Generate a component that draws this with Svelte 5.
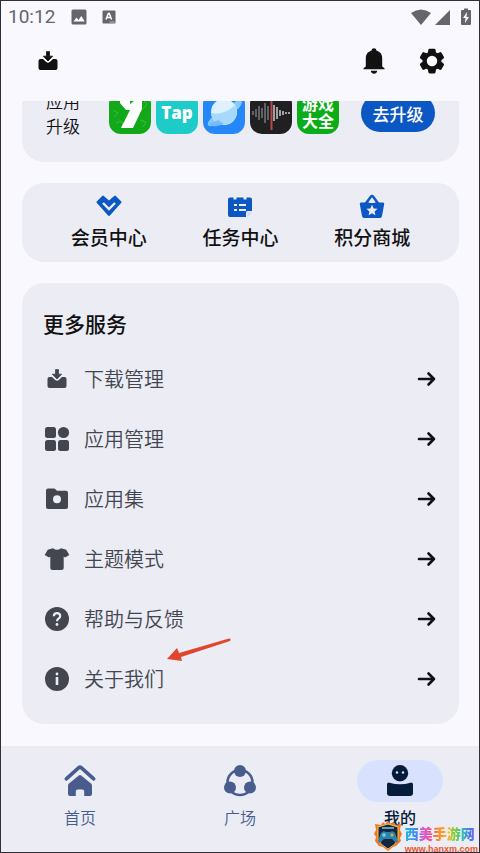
<script>
    const benefits = [
        { id: 'vip', label: '会员中心' },
        { id: 'task', label: '任务中心' },
        { id: 'mall', label: '积分商城' }
    ];

    const services = [
        { id: 'download', label: '下载管理' },
        { id: 'apps', label: '应用管理' },
        { id: 'folder', label: '应用集' },
        { id: 'theme', label: '主题模式' },
        { id: 'help', label: '帮助与反馈' },
        { id: 'about', label: '关于我们' }
    ];

    const tabs = [
        { id: 'home', label: '首页' },
        { id: 'square', label: '广场' },
        { id: 'mine', label: '我的' }
    ];

    // bars of the sound recorder icon: [x, half height]
    const bars = [[3, 2], [6, 4], [9, 7], [12, 5], [15, 10], [18, 7], [24, 8], [27, 6], [30, 3], [33, 2], [36, 1], [39, 1]];

    let activeTab = 'mine';
</script>

{#snippet inbox()}
    <svg class="icon" viewBox="0 0 24 24" fill="currentColor" aria-hidden="true">
        <path d="M10.5 2.6h3v4.6h3.2L12 12 7.3 7.2h3.2z" stroke="currentColor" stroke-width=".8" stroke-linejoin="round" />
        <path d="M4.5 10H7l3.2 3.1q1.8 1.5 3.6 0L17 10h2.5q2 0 2 2v7q0 2-2 2h-15q-2 0-2-2v-7q0-2 2-2z" />
    </svg>
{/snippet}

<div class="screen">
    <div class="status">
        <span class="time">10:12</span>
        <svg width="16" height="16" viewBox="0 0 16 16" aria-hidden="true">
            <rect x=".5" y=".5" width="15" height="15" rx="1.5" fill="#66656b" />
            <path d="M2.5 12.5 5.5 8.5l2 2.4L10.3 7l3.4 5.5z" fill="#fff" />
        </svg>
        <svg class="lang" width="14" height="14" viewBox="0 0 14 14" aria-hidden="true">
            <rect x=".5" y=".5" width="13" height="13" rx="1" fill="#66656b" />
            <path d="M4 9.5 6.3 3.5h1L9.6 9.5M4.8 7.6h4" fill="none" stroke="#fff" stroke-width="1.5" />
            <path d="M7.5 12h5" stroke="#bbb" />
        </svg>
        <svg class="signals" width="62" height="18" viewBox="0 0 62 18" fill="#66656b" aria-hidden="true">
            <path d="M1 5Q11-2 21 5L11 17z" />
            <path d="M40 2v15H25z" />
            <path d="M52 2h2V.5h4V2h2q1 0 1 1v13q0 1-1 1h-8q-1 0-1-1V3q0-1 1-1z" />
            <path d="M57 4l-4 6h2.5L55 15l4-6h-2.5z" fill="#fff" />
        </svg>
    </div>

    <header class="toolbar">
        <button class="tool" aria-label="下载">{@render inbox()}</button>
        <button class="tool push" aria-label="通知">
            <svg class="large" viewBox="0 0 28 28" fill="#111" aria-hidden="true">
                <path d="M14 1.2q2.2 0 2.5 2.2 5.7 1.7 5.7 8v8.1l2.3 1.8v1H3.5v-1l2.3-1.8v-8.1q0-6.300 5.700-8Q11.800 1.200 14 1.200z" />
                <path d="M10.700 23.800h6.600q-.7 2.900-3.300 2.900t-3.300-2.900z" />
            </svg>
        </button>
        <button class="tool" aria-label="设置">
            <svg class="large" viewBox="0 0 24 24" fill="#111" aria-hidden="true">
                <path d="M19.400 13c.04-.3.06-.66.06-1s-.02-.7-.07-1l2.100-1.650c.2-.15.250-.42.130-.64l-2-3.460c-.12-.22-.39-.3-.61-.22l-2.500 1a7.300 7.300 0 0 0-1.700-.98l-.37-2.650A.5.5 0 0 0 13.950 2h-4c-.25 0-.46.180-.5.420l-.37 2.650c-.63.250-1.170.590-1.690.980l-2.490-1c-.23-.09-.49 0-.61.220l-2 3.460c-.13.220-.07.490.12.640L4.530 11c-.04.340-.07.670-.07 1s.03.650.07 1l-2.110 1.650c-.19.150-.25.420-.12.640l2 3.460c.12.220.39.300.61.220l2.490-1.010c.52.400 1.060.740 1.690.990l.37 2.650c.04.240.25.420.5.420h4c.25 0 .46-.18.500-.42l.37-2.650c.63-.26 1.170-.59 1.690-.99l2.490 1.010c.22.080.490 0 .610-.22l2-3.460c.12-.22.070-.49-.12-.64z" stroke="#111" stroke-width="1.200" />
                <circle cx="12" cy="12" r="4.500" fill="#f8f8fe" />
            </svg>
        </button>
    </header>

    <main>
        <section class="card upgrade">
            <p class="upgrade-text">应用<br />升级</p>
            <div class="app-list">
                <div class="app nine">
                    <svg viewBox="0 0 42 42" aria-hidden="true">
                        <path d="M4 18l5 3-4 4M34 8l4 4-4 5M7 31l5-2 3 5M31 28l6 2-3 5" fill="none" stroke="#39bd39" />
                        <path d="M11 5h10v7l4-3V5h8v12l-9 19H12l9-18h-4l-6-7z" fill="#fff" />
                    </svg>
                </div>
                <div class="app tap">Tap</div>
                <div class="app planet">
                    <svg viewBox="0 0 42 42" aria-hidden="true">
                        <path d="M35 8q7 0 1 8L15 32Q4 37 5 31q1-4 7-8z" fill="#86c9ff" />
                        <circle cx="21" cy="20" r="13" fill="#dff1ff" />
                        <path d="M8 21Q21 24 32 13q5 10-3 17-8 5-16 0-5-4-5-9z" fill="#a7d9ff" />
                        <path d="M6 31q5 0 9-3l6 4q-3 1-7 2-7 1-8-3z" fill="#75baff" />
                    </svg>
                </div>
                <div class="app recorder">
                    <svg viewBox="0 0 42 42" aria-hidden="true">
                        {#each bars as [x, h]}
                            <path d="M{x} {21 - h}v{h * 2}" stroke={x < 21 ? '#77777a' : '#ccc'} stroke-width="1.5" />
                        {/each}
                        <path d="M21.500 5v33" stroke="#b4484b" stroke-width="2" />
                    </svg>
                </div>
                <div class="app games">游戏<br />大全</div>
            </div>
            <button class="upgrade-button">去升级</button>
        </section>

        <section class="card benefits">
            {#each benefits as item}
                <button class="benefit">
                    <svg class="icon" viewBox="0 0 24 24" fill="currentColor" aria-hidden="true">
                        {#if item.id === 'vip'}
                            <path d="M6.500.8 12 5.600 17.500.8q.7-.5 1.300.1l5.500 5.500q.6.700 0 1.300L12.900 20.500q-.9.900-1.800 0L-.3 7.700q-.6-.6 0-1.300L5.200.9q.6-.6 1.300-.1z" />
                            <path d="M6 8l6 6 6-6" fill="none" stroke="#ebecf4" stroke-width="2.400" />
                        {:else if item.id === 'task'}
                            <path d="M2 2.500h3.500v2h3v-2h7v2h3v-2H22q2 0 2 2V16h-4.500q-1.500 0-1.500 1.500V22H2q-2 0-2-2V4.500q0-2 2-2z" />
                            <path d="M6 10h3m2 0h7M6 15h3m2 0h7" stroke="#ebecf4" stroke-width="2" />
                            <path d="M19.500 17.500H24L19.500 22z" fill="#c5daf6" />
                        {:else}
                            <path d="M5.500 9 11 1.600q1-1.200 2 0L18.500 9" fill="none" stroke="currentColor" stroke-width="2.500" />
                            <path d="M1 7.500h22q1.500 0 1.200 1.500l-2.200 12q-.3 2-2 2H4q-1.700 0-2-2L-.2 9Q-.5 7.500 1 7.500z" />
                            <path d="M12 4.500 15 8H9zM12 9.800l1.600 3.600 3.900.4-2.900 2.600.8 3.800-3.400-2-3.400 2 .8-3.800-2.900-2.600 3.900-.4z" fill="#ebecf4" />
                        {/if}
                    </svg>
                    <span>{item.label}</span>
                </button>
            {/each}
        </section>

        <section class="card services">
            <h2>更多服务</h2>
            {#each services as item}
                <button class="service">
                    {#if item.id === 'download'}
                        {@render inbox()}
                    {:else}
                        <svg class="icon" viewBox="0 0 24 24" fill="currentColor" aria-hidden="true">
                            {#if item.id === 'apps'}
                                <rect width="11" height="11" rx="2.500" />
                                <circle cx="18.500" cy="5.500" r="5.600" />
                                <rect y="13" width="11" height="11" rx="2.500" />
                                <rect x="13" y="13" width="11" height="11" rx="2.500" />
                            {:else if item.id === 'folder'}
                                <path fill-rule="evenodd" d="M3 1.500h6.500l2.500 2.300h9q2 0 2 2V20q0 2-2 2H3q-2 0-2-2V3.500q0-2 2-2zM12 8.300a4 4 0 1 0 0 8 4 4 0 0 0 0-8z" />
                            {:else if item.id === 'theme'}
                                <path d="M8 1.200q4 3 8 0l4.500 1.200q.8.200 1.200 1L24.300 8l-4.300 2.600-1.300-1V21q0 2-2 2H7.300q-2 0-2-2V9.600l-1.300 1L-.3 8l2.600-4.600q.4-.8 1.200-1z" />
                            {:else if item.id === 'help'}
                                <circle cx="12" cy="12" r="12" />
                                <path d="M8.800 9.200Q9 6.200 12 6.200t3.200 2.800q0 1.600-1.700 2.700-1.500 1-1.500 2.600" fill="none" stroke="#ebecf4" stroke-width="2.200" />
                                <circle cx="12" cy="17.500" r="1.400" fill="#ebecf4" />
                            {:else}
                                <circle cx="12" cy="12" r="12" />
                                <circle cx="12" cy="7" r="1.400" fill="#ebecf4" />
                                <path d="M12 10v8" stroke="#ebecf4" stroke-width="2.600" />
                            {/if}
                        </svg>
                    {/if}
                    <span>{item.label}</span>
                    <svg class="arrow" viewBox="0 0 20 20" aria-hidden="true">
                        <path d="M2 10h15M11.500 4.500 17 10l-5.500 5.500" />
                    </svg>
                </button>
            {/each}
            <svg class="pointer" viewBox="0 0 66 26" aria-hidden="true">
                <path d="M63 1.500q2.500 0 1 2.500L15 20l1 4L1 22 11 11l2 5z" fill="#e0452d" />
            </svg>
        </section>
    </main>

    <nav>
        {#each tabs as tab}
            <button class="tab" class:active={activeTab === tab.id} on:click={() => (activeTab = tab.id)}>
                <span class="pill">
                    <svg viewBox="0 0 32 32" fill="currentColor" aria-hidden="true">
                        {#if tab.id === 'home'}
                            <path d="M2.300 13.800 14.800 2.600q1.200-1 2.400 0l12.500 11.200" fill="none" stroke="currentColor" stroke-width="3.600" stroke-linecap="round" />
                            <path d="M14.800 10.500q1.200-.9 2.400 0L27 18.600q1 .9 1 2V29q0 2-2 2h-5.800v-4.500q0-2-2-2h-4.400q-2 0-2 2V31H6q-2 0-2-2v-8.400q0-1.100 1-2z" />
                        {:else if tab.id === 'square'}
                            <circle cx="16" cy="17.500" r="12.500" fill="none" stroke="currentColor" stroke-width="2.600" />
                            <circle cx="16" cy="6" r="6" />
                            <circle cx="6" cy="22.500" r="6" />
                            <circle cx="26" cy="22.500" r="6" />
                        {:else}
                            <circle cx="16" cy="8.300" r="8.200" />
                            <path d="M5.500 17.700q10.500 3.200 21 0 2.500-.5 2.500 2V28q0 3-3 3H6q-3 0-3-3v-8.300q0-2.500 2.500-2z" />
                            <circle cx="13" cy="7.500" r="1.200" fill="#d8e2ff" />
                            <circle cx="19" cy="7.500" r="1.200" fill="#d8e2ff" />
                        {/if}
                    </svg>
                </span>
                <span>{tab.label}</span>
            </button>
        {/each}
    </nav>

    <div class="watermark">
        <svg width="28" height="30" viewBox="0 0 28 30" aria-hidden="true">
            <path d="M14 0l3 3 3-2 1 3 6-1-1 6 2 4-2 4 1 3-5 5-3 1-5 4-5-4-4-1-4-5 1-4-2-3 2-4-1-6 6 1 2-3 2 2z" fill="#ed7b25" />
            <path d="M14 3l10 3v12q-2 6-10 10Q6 24 4 18V6z" fill="#152642" stroke="#ffc04d" />
            <path d="M7 12q2-3 5-1h4q3-2 5 1l3 8q-1 3-4 0l-2-2h-8l-2 2q-3 3-4 0z" fill="#2983aa" />
            <path d="M8 14h4m-2-2v4M8 7h12" stroke="#76d0dc" stroke-width="1.500" />
            <circle cx="18" cy="14" r="1.500" fill="#f4a541" />
        </svg>
        <div class="site">
            <strong>西美手游网</strong>
            <span>www.hanxm.com</span>
        </div>
    </div>
</div>

<style>
    :global(body) {
        margin: 0;
        font-family: "Noto Sans CJK SC", sans-serif;
    }

    .screen {
        position: relative;
        box-sizing: border-box;
        display: flex;
        flex-direction: column;
        min-height: 100vh;
        overflow: hidden;
        border: 1px solid #302e37;
        background: #f8f8fe;
        color: #111;
    }

    button {
        margin: 0;
        padding: 0;
        border: none;
        background: none;
        color: inherit;
        font: inherit;
        cursor: pointer;
    }

    svg {
        display: block;
        flex: none;
        overflow: visible;
    }

    .icon {
        width: 24px;
        height: 24px;
    }

    .status {
        display: flex;
        align-items: center;
        height: 32px;
        padding: 0 7px;
        color: #66656b;
    }

    .time {
        margin-right: 16px;
        font: 19px/32px Roboto, sans-serif;
    }

    .lang {
        margin-left: 15px;
    }

    .signals {
        margin-left: auto;
    }

    .toolbar {
        display: flex;
        align-items: center;
        gap: 30px;
        height: 56px;
        padding: 0 33px 12px 35px;
    }

    .push {
        margin-left: auto;
    }

    .large {
        width: 28px;
        height: 28px;
    }

    main {
        flex: 1;
        display: flex;
        flex-direction: column;
        gap: 21px;
        overflow: hidden;
        padding: 0 20px 22px 21px;
    }

    .card {
        border-radius: 22px;
        background: #ebecf4;
    }

    /* scrolled partly under the toolbar */
    .upgrade {
        display: flex;
        align-items: center;
        margin-top: -33px;
        padding: 20px 24px 24px;
    }

    .upgrade-text {
        margin: 0 29px 0 0;
        font-size: 17px;
        font-weight: 350;
        line-height: 25px;
    }

    .app-list {
        display: flex;
        gap: 5px;
    }

    .app {
        width: 42px;
        height: 42px;
        overflow: hidden;
        border-radius: 12px;
        color: #fff;
        text-align: center;
    }

    .nine {
        background: #12a81a;
    }

    .tap {
        background: #1dcbc9;
        font: 800 17px/42px "Open Sans", sans-serif;
    }

    .planet {
        background: #2588f8;
    }

    .recorder {
        background: #202022;
    }

    .games {
        box-sizing: border-box;
        padding-top: 3px;
        background: #0cac18;
        font-size: 16px;
        font-weight: 700;
        line-height: 17px;
    }

    .upgrade-button {
        width: 74px;
        height: 38px;
        margin-left: auto;
        border-radius: 19px;
        background: #0b57c4;
        color: #fff;
        font-size: 17px;
        font-weight: 500;
    }

    .benefits {
        display: grid;
        grid-template-columns: repeat(3, 1fr);
        padding: 12px 21px 11px;
    }

    .benefit {
        display: flex;
        flex-direction: column;
        align-items: center;
        gap: 4px;
        font-size: 19px;
        line-height: 28px;
        font-weight: 500;
    }

    .benefit .icon {
        color: #0b57c4;
    }

    .services {
        position: relative;
        padding: 0 21px 15px;
    }

    h2 {
        margin: 0;
        padding: 24px 0 10px;
        font-size: 21px;
        line-height: 32px;
        font-weight: 500;
    }

    .service {
        display: flex;
        align-items: center;
        gap: 15px;
        width: 100%;
        height: 60px;
        padding: 0 1px 0 2px;
        color: #43464f;
        font-size: 20px;
        font-weight: 350;
        line-height: 28px;
        text-align: left;
    }

    .arrow {
        width: 20px;
        height: 20px;
        margin-left: auto;
        fill: none;
        stroke: #111118;
        stroke-width: 2.6;
        stroke-linecap: round;
        stroke-linejoin: round;
    }

    .pointer {
        position: absolute;
        left: 144px;
        bottom: 61px;
        width: 66px;
        height: 26px;
    }

    nav {
        display: grid;
        grid-template-columns: repeat(3, 1fr);
        margin: 0 -1px;
        background: #ebecf4;
    }

    .tab {
        display: flex;
        flex-direction: column;
        align-items: center;
        gap: 3px;
        padding: 14px 0 23px;
        color: #485d8e;
        font-size: 16px;
        font-weight: 350;
        line-height: 24px;
    }

    .pill {
        display: flex;
        align-items: center;
        justify-content: center;
        width: 86px;
        height: 42px;
        border-radius: 21px;
    }

    .pill svg {
        width: 32px;
        height: 32px;
    }

    .active {
        color: #071b3b;
        font-weight: 500;
    }

    .active .pill {
        background: #d8e2ff;
    }

    .watermark {
        position: absolute;
        right: 1px;
        bottom: -3px;
        display: flex;
        gap: 3px;
        pointer-events: none;
    }

    .site {
        display: flex;
        flex-direction: column;
        padding-top: 2px;
    }

    .site strong {
        background: linear-gradient(90deg, #16b9e8, #4388f0 16%, #d756db 24%, #f0518c 36%, #ff8b22 46%, #ffb41c 58%, #83cf37 68%, #30c6a2 78%, #477be9 88%, #9b48ee);
        background-clip: text;
        color: transparent;
        font-size: 14px;
        line-height: 20px;
        font-weight: 900;
    }

    .site span {
        color: #e9572c;
        font: bold 9px/12px "Liberation Sans", sans-serif;
    }
</style>
